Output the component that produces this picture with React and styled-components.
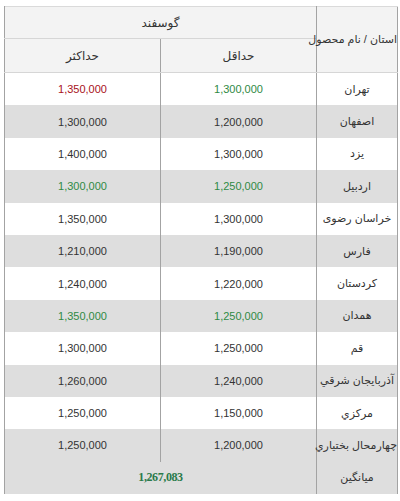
import React from 'react';
import styled, { createGlobalStyle } from 'styled-components';

const GlobalStyle = createGlobalStyle`
  body {
    margin: 0;
    background: #fff;
  }
`;

const Wrapper = styled.div`
  padding: 6px 3px 0 4px;
`;

const Table = styled.table`
  width: 393px;
  border-collapse: collapse;
  direction: rtl;
  table-layout: fixed;
  font-family: 'Liberation Sans', 'DejaVu Sans', sans-serif;
  font-size: 11px;
  color: #333;
`;

const HeadCell = styled.th`
  background-color: #f3f3f3;
  font-weight: normal;
  text-align: ${(props) => (props.right ? 'right' : 'center')};
  height: ${(props) => props.h || 31}px;
  padding: 0;
  white-space: nowrap;
  border-left: 1px solid #a3a3a3;
  border-right: 1px solid #a3a3a3;
  border-top: 1px solid #dadada;
  border-bottom: 1px solid #d6d6d6;
  font-size: ${(props) => (props.right ? '11px' : '12px')};
`;

const Row = styled.tr`
  background-color: ${(props) => (props.gray ? '#dedede' : '#fff')};
`;

const Cell = styled.td`
  height: 32.4px;
  padding: 0;
  text-align: center;
  white-space: nowrap;
  overflow: visible;
  border-left: 1px solid #a3a3a3;
  border-right: 1px solid #a3a3a3;
  font-size: 11px;
  color: ${(props) =>
    props.tone === 'green' ? '#2f8a45' : props.tone === 'red' ? '#a8121c' : '#333'};
`;

const AvgValue = styled.td`
  height: 32px;
  padding: 0;
  text-align: center;
  border-left: 1px solid #a3a3a3;
  border-right: 1px solid #a3a3a3;
  font-family: 'Liberation Serif', serif;
  font-weight: bold;
  font-size: 12px;
  color: #2a7a4a;
  letter-spacing: -0.4px;
`;

const rows = [
  { name: 'تهران', min: '1,300,000', max: '1,350,000', minTone: 'green', maxTone: 'red' },
  { name: 'اصفهان', min: '1,200,000', max: '1,300,000' },
  { name: 'یزد', min: '1,300,000', max: '1,400,000' },
  { name: 'اردبیل', min: '1,250,000', max: '1,300,000', minTone: 'green', maxTone: 'green' },
  { name: 'خراسان رضوی', min: '1,300,000', max: '1,350,000' },
  { name: 'فارس', min: '1,190,000', max: '1,210,000' },
  { name: 'کردستان', min: '1,220,000', max: '1,240,000' },
  { name: 'همدان', min: '1,250,000', max: '1,350,000', minTone: 'green', maxTone: 'green' },
  { name: 'قم', min: '1,250,000', max: '1,300,000' },
  { name: 'آذربايجان شرقي', min: '1,240,000', max: '1,260,000' },
  { name: 'مركزي', min: '1,150,000', max: '1,250,000' },
  { name: 'چهارمحال بختياري', min: '1,200,000', max: '1,250,000' },
];

const App = () => {
  return (
    <Wrapper>
      <GlobalStyle />
      <Table>
        <colgroup>
          <col style={{ width: '81px' }} />
          <col style={{ width: '156px' }} />
          <col style={{ width: '156px' }} />
        </colgroup>
        <thead>
          <tr>
            <HeadCell right rowSpan={2}>استان / نام محصول</HeadCell>
            <HeadCell colSpan={2} h={31}>گوسفند</HeadCell>
          </tr>
          <tr>
            <HeadCell h={33}>حداقل</HeadCell>
            <HeadCell h={33}>حداکثر</HeadCell>
          </tr>
        </thead>
        <tbody>
          {rows.map((item, i) => (
            <Row key={item.name} gray={i % 2 === 1}>
              <Cell>{item.name}</Cell>
              <Cell tone={item.minTone}>{item.min}</Cell>
              <Cell tone={item.maxTone}>{item.max}</Cell>
            </Row>
          ))}
          <Row gray>
            <Cell>میانگین</Cell>
            <AvgValue colSpan={2}>1,267,083</AvgValue>
          </Row>
        </tbody>
      </Table>
    </Wrapper>
  );
};

export default App;
